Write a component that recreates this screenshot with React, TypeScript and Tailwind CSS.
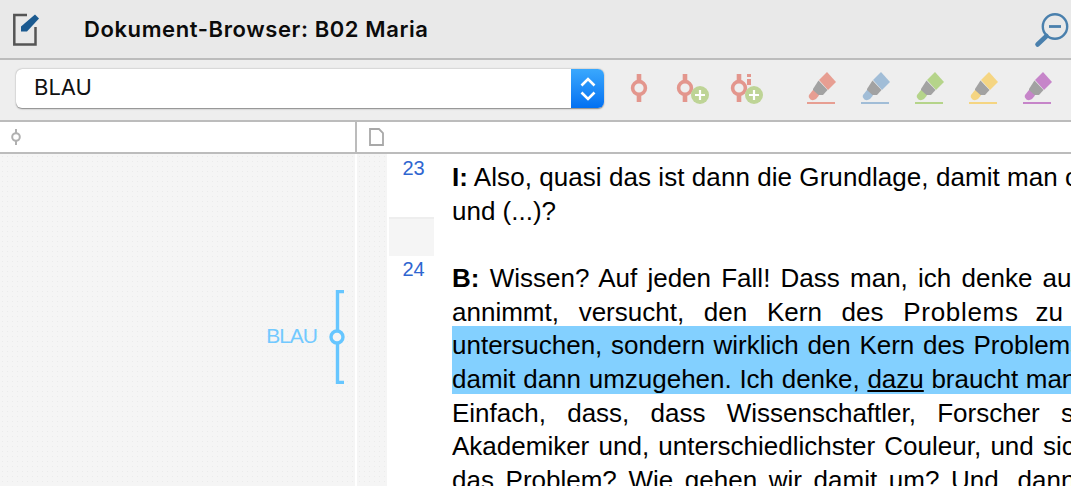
const sans = "font-['Liberation_Sans',Arial,sans-serif]";

function Pin({ x = 0 }: { x?: number }) {
  return (
    <g transform={`translate(${x} 0)`} stroke="#e3968d" fill="none">
      <path d="M9 0V8M9 20V28" strokeWidth="4.6" />
      <circle cx="9" cy="14" r="6.4" strokeWidth="3.6" />
    </g>
  );
}

function Plus({ cx, cy }: { cx: number; cy: number }) {
  return (
    <g>
      <circle cx={cx} cy={cy} r="9" fill="#bed496" />
      <path d={`M${cx - 5} ${cy}H${cx + 5}M${cx} ${cy - 5}V${cy + 5}`} stroke="#fff" strokeWidth="2.2" />
    </g>
  );
}

function Marker({ color }: { color: string }) {
  return (
    <svg width="30" height="34" viewBox="0 0 30 34" className="shrink-0">
      <path d="M12 8L20 0L29 10L21 18Z" fill={color} />
      <path d="M11.5 8.5L20.5 18L16 23H6V17Z" fill="#a2a2a2" />
      <path d="M6 18L12 23.5L9 27Q6 29 3.500 27.500Q1 25 2 23Z" fill={color} />
      <rect x="0" y="30" width="28" height="2" fill={color} />
    </svg>
  );
}

function Line({ children, spacing }: { children: React.ReactNode; spacing: string }) {
  return <div className={`h-[33.7px] whitespace-nowrap leading-[39.7px] ${spacing}`}>{children}</div>;
}

export default function App() {
  return (
    <div className="flex h-[486px] w-[1071px] flex-col overflow-hidden bg-white">
      <header className="flex h-[60px] shrink-0 items-center justify-between border-b-2 border-[#bcbcbc] bg-[#e9e9e9]">
        <div className="flex items-center">
          <svg width="28" height="33" viewBox="0 0 28 33" className="ml-[13px] mt-[1px]">
            <path d="M14 2H1.300V31.500H22.500V14" fill="none" stroke="#555" strokeWidth="2.500" />
            <path d="M8 18.500V13.500L22 1.500L26 5.500L14 18.500Z" fill="#1b5a90" />
          </svg>
          <h1 className="ml-[43px] font-['Inter',sans-serif] text-[22px] font-semibold tracking-[0.6px] text-[#0b0b0b]">
            Dokument-Browser: B02 Maria
          </h1>
        </div>
        <svg width="38" height="38" viewBox="0 0 38 38" className="mr-[-1px] mt-[-1px]">
          <circle cx="21" cy="16.500" r="12.200" fill="none" stroke="#4a80ad" strokeWidth="2.400" />
          <path d="M15 16.500H27" stroke="#4a80ad" strokeWidth="2.800" />
          <path d="M12.500 26L3.500 34.500" stroke="#4a80ad" strokeWidth="4.600" strokeLinecap="round" />
        </svg>
      </header>

      <div className="flex h-[62px] shrink-0 items-center border-b-2 border-[#bcbcbc] bg-[#eeeeee] pb-[2px] pl-[16px]">
        <div className="mb-[1px] flex h-[39px] w-[588px] items-stretch overflow-hidden rounded-[6px] bg-white shadow-[0_0.5px_1.5px_rgba(0,0,0,0.45)]">
          <span className="flex-1 pl-[18px] font-['Inter',sans-serif] text-[22px] leading-[37px] text-[#111]">BLAU</span>
          <span className="flex w-[33px] items-center justify-center bg-gradient-to-b from-[#3aa8fd] to-[#0270f2]">
            <svg width="18" height="28" viewBox="0 0 18 28">
              <path d="M2.500 10.500L9 4L15.500 10.500M2.500 17.500L9 24L15.500 17.500" fill="none" stroke="#fff" strokeWidth="2.600" />
            </svg>
          </span>
        </div>
        <svg width="134" height="30" viewBox="0 0 134 30" className="ml-[26px]">
          <Pin x={0} />
          <Pin x={46} />
          <Plus cx={70} cy={21} />
          <Pin x={100} />
          <path d="M119 -1V3M119 5V11" stroke="#e3968d" strokeWidth="4" />
          <Plus cx={124} cy={21} />
        </svg>
        <div className="ml-[43px] flex gap-[24px]">
          <Marker color="#e79e92" />
          <Marker color="#a1bdd7" />
          <Marker color="#b5d48a" />
          <Marker color="#f5d582" />
          <Marker color="#c685c9" />
        </div>
      </div>

      <div className="flex h-[32px] shrink-0 border-b-2 border-[#bcbcbc] bg-white">
        <div className="flex w-[357px] items-center border-r-2 border-[#bcbcbc] pl-[10px]">
          <svg width="12" height="18" viewBox="0 0 12 18">
            <path d="M6 1V5M6 13V17" stroke="#b0b0b0" strokeWidth="2" />
            <circle cx="6" cy="9" r="3.800" fill="none" stroke="#b0b0b0" strokeWidth="2" />
          </svg>
        </div>
        <div className="flex items-center pl-[12px]">
          <svg width="15" height="18" viewBox="0 0 15 18">
            <path d="M1 1H10L14 5V17H1Z" fill="#fff" stroke="#a8a8a8" strokeWidth="1.800" />
          </svg>
        </div>
      </div>

      <main className="flex min-h-0 flex-1">
        <aside className="flex w-[355px] shrink-0 items-start justify-end bg-[#f5f5f5] bg-[radial-gradient(#ebebeb_0.7px,transparent_0.8px)] bg-[length:5px_5px] pr-[10px] pt-[136px]">
          <span className={`${sans} mr-[10px] mt-[32px] text-[21px] leading-[28px] tracking-[-1px] text-[#72c9ff]`}>BLAU</span>
          <svg width="18" height="94" viewBox="0 0 18 94">
            <path d="M17 1.500H10.500V92.500H17" fill="none" stroke="#66c6ff" strokeWidth="3.400" />
            <circle cx="10" cy="47" r="6" fill="#f5f5f5" stroke="#66c6ff" strokeWidth="3.400" />
          </svg>
        </aside>
        <div className="ml-[2px] w-[30px] shrink-0 bg-[#f5f5f5] bg-[radial-gradient(#ebebeb_0.7px,transparent_0.8px)] bg-[length:5px_5px]" />
        <div className="ml-[2px] flex w-[45px] shrink-0 flex-col text-center">
          <div className={`${sans} h-[63px] pl-[4px] pt-[3px] text-[20px] leading-[22px] text-[#2f66d0]`}>23</div>
          <div className="h-[39px] border-t-2 border-[#eeeeee] bg-[#f5f5f5]" />
          <div className={`${sans} pl-[4px] pt-[2px] text-[20px] leading-[22px] text-[#2f66d0]`}>24</div>
        </div>
        <article className={`${sans} ml-[18px] min-w-0 flex-1 overflow-hidden pt-[4px] text-[26px] text-black`}>
          <Line spacing="tracking-[0.06px]"><b>I:</b> Also, quasi das ist dann die Grundlage, damit man oft</Line>
          <Line spacing="">und (...)?</Line>
          <div className="h-[33.5px]" />
          <Line spacing="[word-spacing:3px]"><b>B:</b> Wissen? Auf jeden Fall! Dass man, ich denke auch</Line>
          <Line spacing="[word-spacing:12.5px]">annimmt, versucht, den Kern des <span className="tracking-[0.7px]">Problems</span> <span className="ml-[-3px]">zu</span> erkennen</Line>
          <Line spacing="bg-[#83d0ff] [word-spacing:1.4px]">untersuchen, sondern wirklich den Kern des Problems zu</Line>
          <Line spacing="bg-[#83d0ff] [word-spacing:0.4px]">damit dann umzugehen. Ich denke, <u>dazu</u> braucht man das</Line>
          <Line spacing="[word-spacing:14px]">Einfach, dass, dass Wissenschaftler, Forscher sich</Line>
          <Line spacing="[word-spacing:2px]">Akademiker und, unterschiedlichster Couleur, und sich fragen</Line>
          <Line spacing="[word-spacing:4.4px]">das Problem? Wie gehen wir damit um? Und, dann</Line>
        </article>
      </main>
    </div>
  );
}
